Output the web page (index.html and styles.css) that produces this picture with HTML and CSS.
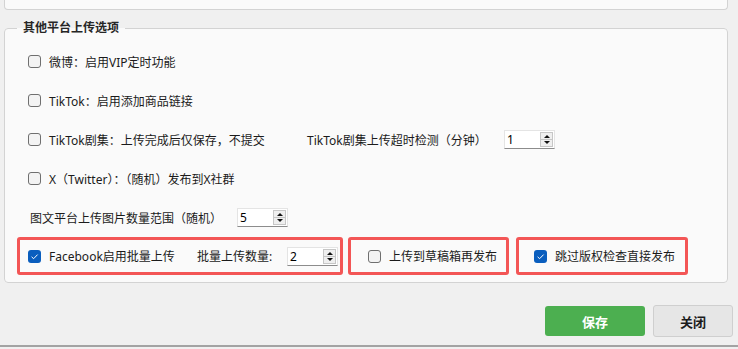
FILE: index.html
```html
<!DOCTYPE html>
<html lang="zh-CN">
<head>
    <meta charset="UTF-8">
    <meta name="viewport" content="width=device-width, initial-scale=1.0">
    <title>上传设置</title>
    <link rel="stylesheet" href="styles.css">
</head>
<body>

<div class="top-panel"></div>

<fieldset class="group">
    <legend>其他平台上传选项</legend>

    <div class="row">
        <label class="check"><span class="cb"></span>微博：启用VIP定时功能</label>
    </div>

    <div class="row">
        <label class="check"><span class="cb"></span>TikTok：启用添加商品链接</label>
    </div>

    <div class="row">
        <label class="check w-tiktok"><span class="cb"></span>TikTok剧集：上传完成后仅保存，不提交</label>
        <span class="field-label w-timeout">TikTok剧集上传超时检测（分钟）</span>
        <div class="spin"><span class="spin-value">1</span><span class="spin-btns"><i class="up"></i><i class="down"></i></span></div>
    </div>

    <div class="row">
        <label class="check"><span class="cb"></span>X（Twitter）：（随机）发布到X社群</label>
    </div>

    <div class="row row-plain">
        <span class="field-label w-range">图文平台上传图片数量范围（随机）</span>
        <div class="spin"><span class="spin-value">5</span><span class="spin-btns"><i class="up"></i><i class="down"></i></span></div>
    </div>

    <div class="row-marked">
        <div class="mark mark-fb">
            <label class="check w-fb"><span class="cb checked"><svg viewBox="0 0 13 13" width="13" height="13"><path d="M3.6 6.8 L5.6 8.7 L9.6 4.6" fill="none" stroke="#fff" stroke-width="1"/></svg></span>Facebook启用批量上传</label>
            <span class="field-label w-batch">批量上传数量:</span>
            <div class="spin"><span class="spin-value">2</span><span class="spin-btns"><i class="up"></i><i class="down"></i></span></div>
        </div>
        <div class="mark mark-draft">
            <label class="check"><span class="cb"></span>上传到草稿箱再发布</label>
        </div>
        <div class="mark mark-skip">
            <label class="check"><span class="cb checked"><svg viewBox="0 0 13 13" width="13" height="13"><path d="M3.6 6.8 L5.6 8.7 L9.6 4.6" fill="none" stroke="#fff" stroke-width="1"/></svg></span>跳过版权检查直接发布</label>
        </div>
    </div>
</fieldset>

<div class="actions">
    <button class="btn btn-save">保存</button>
    <button class="btn btn-close">关闭</button>
</div>

<div class="window-edge"></div>

</body>
</html>
```

FILE: styles.css
```css
body {
    margin: 0;
    padding: 0;
    background: #f0f0f0;
    color: #1b1b1b;
    font-family: "Noto Sans", "Noto Sans CJK SC", sans-serif;
    font-size: 12px;
    width: 738px;
    height: 349px;
    overflow: hidden;
}

.top-panel {
    margin-left: 4px;
    width: 722px;
    height: 9px;
    background: #fafafa;
    border: 1px solid #d3d3d3;
    border-top: none;
    border-radius: 0 0 4px 4px;
}

.group {
    margin: 10px 0 0 4px;
    width: 724px;
    box-sizing: border-box;
    padding: 6px 0 7px 12px;
    border: 1px solid #d3d3d3;
    border-radius: 4px;
    background: #fafafa;
}

.group legend {
    padding: 0 6px;
    font-weight: bold;
    line-height: 16px;
    color: #262626;
}

.row {
    display: flex;
    align-items: center;
    height: 39px;
    padding-left: 11px;
}

.row-plain {
    padding-left: 13px;
}

.check {
    display: flex;
    align-items: center;
    white-space: nowrap;
}

.cb {
    display: inline-block;
    width: 11px;
    height: 11px;
    margin-right: 8px;
    border: 1px solid #6f6f6f;
    border-radius: 3px;
    background: #f3f3f3;
    flex: none;
}

.cb.checked {
    width: 13px;
    height: 13px;
    border: none;
    background: #0a5ebe;
}

.cb svg {
    display: block;
}

.field-label {
    white-space: nowrap;
}

.w-tiktok { width: 279px; }
.w-timeout { width: 197px; }
.w-range { width: 207px; }
.w-fb { width: 169px; }
.w-batch { width: 90px; }

.spin {
    display: flex;
    align-items: center;
    justify-content: space-between;
    width: 47px;
    height: 17px;
    padding-left: 2px;
    background: #fff;
    border: 1px solid #e4e4e4;
    border-bottom: 1px solid #8c8c8c;
    color: #000;
}

.spin-btns {
    display: flex;
    flex-direction: column;
    width: 13px;
    height: 15px;
    margin-right: 1px;
    border: 1px solid #c6c6c6;
    background: #efefef;
    box-sizing: border-box;
}

.spin-btns i {
    flex: 1;
    position: relative;
}

.spin-btns i.up {
    border-bottom: 1px solid #c6c6c6;
}

.spin-btns i::after {
    content: "";
    position: absolute;
    left: 3px;
    top: 2px;
    border-left: 3px solid transparent;
    border-right: 3px solid transparent;
}

.spin-btns i.up::after {
    border-bottom: 3px solid #111;
}

.spin-btns i.down::after {
    border-top: 3px solid #111;
    top: 1px;
}

.row-marked {
    display: flex;
    height: 38px;
}

.mark {
    display: flex;
    align-items: center;
    box-sizing: border-box;
    height: 38px;
    border: 3px solid #f35656;
    border-radius: 3px;
}

.mark-fb {
    width: 326px;
    padding-left: 8px;
}

.mark-draft {
    width: 161px;
    margin-left: 5px;
    padding-left: 17px;
}

.mark-skip {
    width: 172px;
    margin-left: 7px;
    padding-left: 15px;
}

.actions {
    display: flex;
    justify-content: flex-end;
    align-items: center;
    gap: 8px;
    margin-top: 22px;
    padding-right: 5px;
    height: 32px;
}

.btn {
    font-family: "Noto Sans CJK SC", sans-serif;
    font-size: 13px;
    font-weight: bold;
    border-radius: 3px;
    cursor: pointer;
}

.btn-save {
    width: 100px;
    height: 30px;
    border: none;
    background: #4caf50;
    color: #fff;
}

.btn-close {
    width: 80px;
    height: 32px;
    border: 1px solid #cfcfcf;
    background: #e6e6e6;
    color: #1b1b1b;
}

.window-edge {
    margin-top: 8px;
    height: 2px;
    background: #a3a3a3;
}
```
